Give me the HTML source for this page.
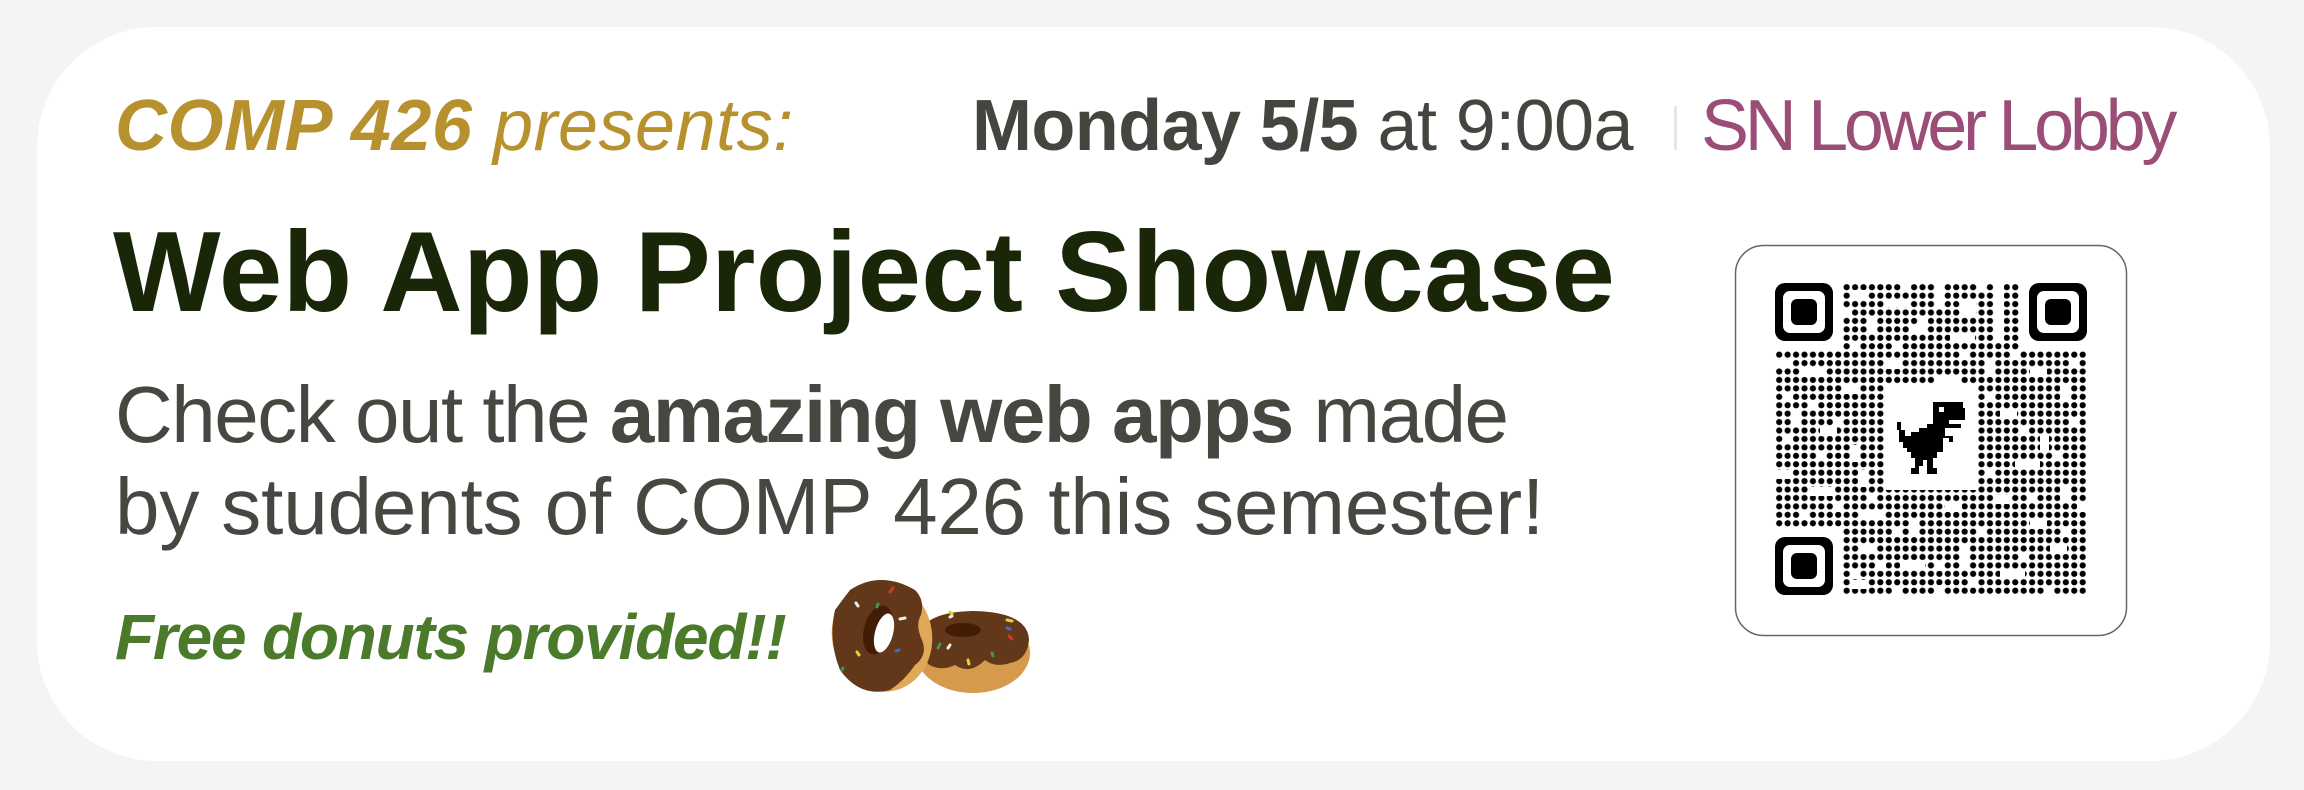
<!DOCTYPE html>
<html><head><meta charset="utf-8"><style>
html,body{margin:0;padding:0;width:2304px;height:790px;background:#f4f4f4;overflow:hidden}
.card{position:absolute;left:37px;top:27px;width:2233px;height:734px;background:#fff;border-radius:120px}
.t{position:absolute;font-family:"Liberation Sans",sans-serif;white-space:nowrap;line-height:1}
</style></head><body>
<div class="card"></div>
<div class="t" style="left:115px;top:90px;font-size:72px;color:#b8912f;font-style:italic;letter-spacing:0.5px"><b>COMP 426</b> presents:</div>
<div class="t" style="left:972px;top:90px;font-size:72px;color:#454540;letter-spacing:-0.6px"><b>Monday 5/5</b> at 9:00a</div>
<div style="position:absolute;left:1674px;top:106px;width:3px;height:44px;background:#e6e6e6"></div>
<div class="t" style="left:1701px;top:90px;font-size:72px;color:#9a4d77;letter-spacing:-4.3px">SN Lower Lobby</div>
<div class="t" style="left:113px;top:216px;font-size:114px;font-weight:bold;color:#1a2608;letter-spacing:0.3px">Web App Project Showcase</div>
<div class="t" style="left:115px;top:369px;font-size:80px;color:#474741;letter-spacing:-1.5px;line-height:92px">Check out the <b>amazing web apps</b> made</div>
<div class="t" style="left:115px;top:461px;font-size:80px;color:#474741;letter-spacing:-0.15px;line-height:92px">by students of COMP 426 this semester!</div>
<div class="t" style="left:115px;top:605px;font-size:64px;font-weight:bold;font-style:italic;color:#4a7a2a;letter-spacing:-1.2px">Free donuts provided!!</div>
<svg style="position:absolute;left:0;top:0" width="2304" height="790">
 <g>
  <ellipse cx="973" cy="653" rx="57" ry="40" fill="#d59a4c"/>
  <path d="M918 640 Q920 612 973 611 Q1028 612 1029 640 Q1027 660 1010 663 Q995 668 985 660 Q970 675 955 665 Q940 672 928 664 Z" fill="#633719"/>
  <ellipse cx="963" cy="630" rx="18" ry="7" fill="#431c05"/>
  <ellipse cx="882" cy="636" rx="50" ry="56" fill="#e0a95a" transform="rotate(-12 882 636)"/>
  <path d="M850 590 Q880 570 915 590 Q925 600 921 615 Q915 625 922 640 Q928 655 915 665 Q905 680 890 690 Q860 698 840 670 Q828 640 835 610 Z" fill="#633719"/>
  <ellipse cx="878" cy="630" rx="14" ry="25" fill="#431c05" transform="rotate(15 878 630)"/>
  <ellipse cx="884" cy="633" rx="9" ry="20" fill="#fff" transform="rotate(15 884 633)"/>
  <g stroke-width="3" stroke-linecap="round">
   <line x1="890" y1="592" x2="893" y2="588" stroke="#d03a2a"/><line x1="856" y1="603" x2="858" y2="606" stroke="#eee"/>
   <line x1="877" y1="607" x2="878" y2="604" stroke="#3c9a4a"/><line x1="900" y1="619" x2="905" y2="618" stroke="#eee"/>
   <line x1="857" y1="652" x2="859" y2="655" stroke="#e8d030"/><line x1="896" y1="651" x2="899" y2="650" stroke="#3a6fd0"/>
   <line x1="842" y1="670" x2="843" y2="668" stroke="#3c9a4a"/><line x1="950" y1="617" x2="952" y2="616" stroke="#eee"/>
   <line x1="950" y1="645" x2="948" y2="648" stroke="#eee"/><line x1="940" y1="644" x2="938" y2="648" stroke="#3c9a4a"/>
   <line x1="968" y1="660" x2="969" y2="664" stroke="#e8d030"/><line x1="992" y1="653" x2="993" y2="656" stroke="#3c9a4a"/>
   <line x1="1007" y1="628" x2="1010" y2="629" stroke="#3a6fd0"/><line x1="1009" y1="636" x2="1012" y2="639" stroke="#d03a2a"/>
   <line x1="1007" y1="620" x2="1012" y2="621" stroke="#e8d030"/><line x1="950" y1="612" x2="952" y2="614" stroke="#e8d030"/>
  </g>
 </g>
 <rect x="1735.5" y="245.5" width="391" height="390" rx="28" fill="#fff" stroke="#666" stroke-width="1.5"/>
 <defs>
  <pattern id="d" x="1775" y="283" width="8.43" height="8.43" patternUnits="userSpaceOnUse"><circle cx="4.2" cy="4.2" r="3.1" fill="#000"/></pattern>
 </defs>
 <rect x="1775" y="283" width="312" height="312" fill="url(#d)"/>
 <g fill="#fff">
  <rect x="1773" y="281" width="70" height="70"/><rect x="2019" y="281" width="70" height="70"/><rect x="1773" y="527" width="70" height="70"/>
  <rect x="1850" y="290" width="17" height="9"/><rect x="1885" y="299" width="25" height="8"/><rect x="1935" y="282" width="9" height="26"/>
  <rect x="1960" y="300" width="16" height="16"/><rect x="1995" y="283" width="9" height="60"/><rect x="1868" y="316" width="9" height="17"/>
  <rect x="1910" y="325" width="17" height="9"/><rect x="1950" y="333" width="25" height="9"/><rect x="1775" y="360" width="17" height="8"/>
  <rect x="1800" y="368" width="25" height="9"/><rect x="1843" y="385" width="17" height="9"/><rect x="1885" y="360" width="17" height="9"/>
  <rect x="1935" y="375" width="25" height="9"/><rect x="1985" y="360" width="9" height="17"/><rect x="2030" y="368" width="17" height="9"/>
  <rect x="2060" y="385" width="9" height="17"/><rect x="1792" y="410" width="9" height="17"/><rect x="1820" y="427" width="17" height="9"/>
  <rect x="1850" y="445" width="9" height="17"/><rect x="1775" y="470" width="17" height="9"/><rect x="1810" y="487" width="25" height="9"/>
  <rect x="1858" y="470" width="9" height="17"/><rect x="2000" y="410" width="17" height="9"/><rect x="2040" y="435" width="9" height="17"/>
  <rect x="2015" y="460" width="25" height="9"/><rect x="2060" y="485" width="9" height="17"/><rect x="1995" y="495" width="17" height="9"/>
  <rect x="1860" y="510" width="25" height="9"/><rect x="1910" y="520" width="9" height="17"/><rect x="1945" y="503" width="17" height="9"/>
  <rect x="2030" y="520" width="17" height="9"/><rect x="1860" y="545" width="17" height="9"/><rect x="1900" y="560" width="25" height="9"/>
  <rect x="1960" y="545" width="9" height="25"/><rect x="2000" y="570" width="25" height="9"/><rect x="1850" y="580" width="17" height="9"/>
  <rect x="2050" y="545" width="17" height="9"/><rect x="1935" y="585" width="9" height="10"/>
  <rect x="1826" y="300" width="9" height="9"/><rect x="1843" y="308" width="9" height="9"/><rect x="1902" y="283" width="9" height="9"/>
  <rect x="1919" y="316" width="9" height="9"/><rect x="1977" y="283" width="9" height="9"/><rect x="1851" y="342" width="9" height="9"/>
  <rect x="1893" y="342" width="9" height="9"/><rect x="1960" y="351" width="9" height="9"/><rect x="2011" y="351" width="9" height="9"/>
  <rect x="2069" y="359" width="9" height="9"/><rect x="1784" y="393" width="9" height="9"/><rect x="1809" y="401" width="9" height="9"/>
  <rect x="1834" y="418" width="9" height="9"/><rect x="1784" y="435" width="9" height="9"/><rect x="1817" y="452" width="9" height="9"/>
  <rect x="1800" y="511" width="9" height="9"/><rect x="1834" y="503" width="9" height="9"/><rect x="1868" y="494" width="9" height="9"/>
  <rect x="1986" y="393" width="9" height="9"/><rect x="2019" y="427" width="9" height="9"/><rect x="2069" y="418" width="9" height="9"/>
  <rect x="2053" y="452" width="9" height="9"/><rect x="1986" y="469" width="9" height="9"/><rect x="2077" y="503" width="9" height="9"/>
  <rect x="2028" y="494" width="9" height="9"/><rect x="1893" y="528" width="9" height="9"/><rect x="1977" y="528" width="9" height="9"/>
  <rect x="2061" y="528" width="9" height="9"/><rect x="1877" y="562" width="9" height="9"/><rect x="1935" y="562" width="9" height="9"/>
  <rect x="2019" y="553" width="9" height="9"/><rect x="1851" y="570" width="9" height="9"/><rect x="1969" y="578" width="9" height="9"/>
  <rect x="2044" y="587" width="9" height="9"/><rect x="1893" y="587" width="9" height="9"/>
  <rect x="1885" y="385" width="92" height="105"/>
 </g>
 <g fill="#000">
  <rect x="1775" y="283" width="58" height="58" rx="10"/><rect x="2029" y="283" width="58" height="58" rx="10"/><rect x="1775" y="537" width="58" height="58" rx="10"/>
 </g>
 <g fill="#fff"><rect x="1783" y="291" width="42" height="42" rx="7"/><rect x="2037" y="291" width="42" height="42" rx="7"/><rect x="1783" y="545" width="42" height="42" rx="7"/></g>
 <g fill="#000"><rect x="1791" y="299" width="26" height="26" rx="6"/><rect x="2045" y="299" width="26" height="26" rx="6"/><rect x="1791" y="553" width="26" height="26" rx="6"/></g>
 <g transform="translate(1897 402)">
  <path fill="#000" d="M36 0H66V6H68V18H52V22H64V26H48V34H56V40H52V36H46V50H40V56H36V66H40V72H30V58H26V64H22V72H14V66H18V56H14V50H10V46H6V40H2V28H0V20H4V28H8V34H14V30H22V26H30V22H36Z"/>
  <rect x="42" y="5" width="5" height="5" fill="#fff"/>
 </g>
</svg>
</body></html>
